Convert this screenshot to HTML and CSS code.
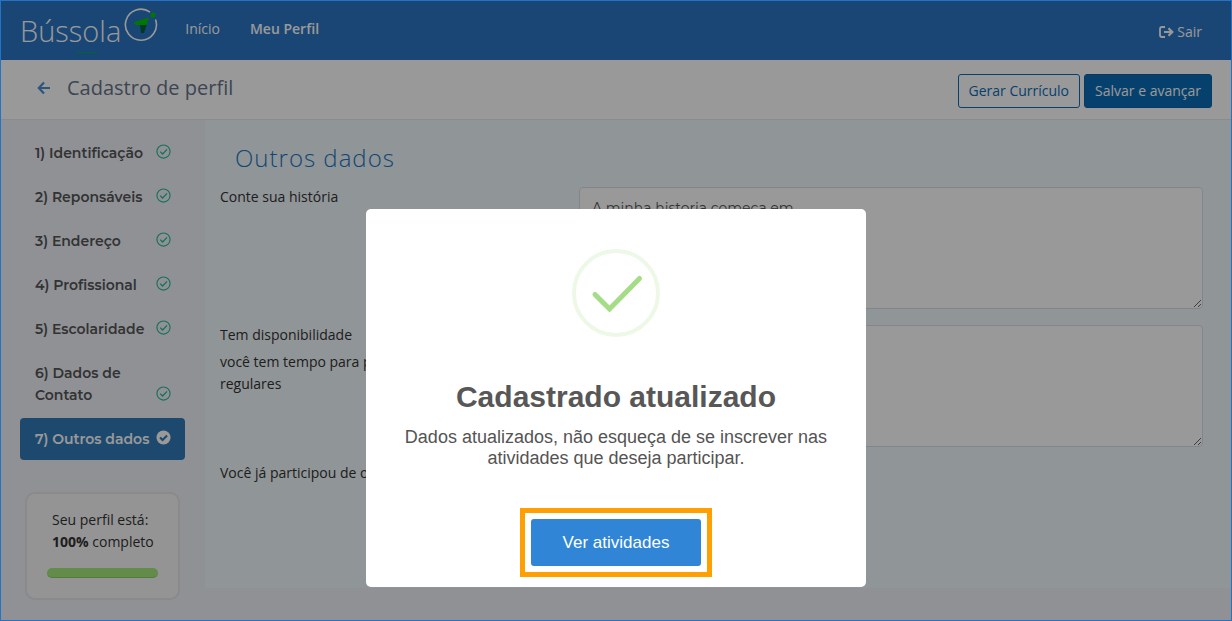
FILE: index.html
```html
<!DOCTYPE html>
<html lang="pt-BR">
<head>
    <meta charset="UTF-8">
    <meta name="viewport" content="width=device-width, initial-scale=1.0">
    <title>Bússola - Cadastro de perfil</title>
    <link rel="stylesheet" href="styles.css">
</head>
<body>
    <svg class="sprite" aria-hidden="true">
        <symbol id="check" viewBox="0 0 16 16">
            <circle cx="8" cy="8" r="7" fill="none" stroke="currentColor" stroke-width="1.200"/>
            <path d="M4.500 8.200l2.500 2.500 4.800-5" fill="none" stroke="currentColor" stroke-width="1.300"/>
        </symbol>
    </svg>

    <header class="navbar">
        <a class="logo" href="#">
            <span class="logo-text">Bússola</span>
            <svg class="logo-icon" width="34" height="34" viewBox="0 0 34 34">
                <path d="M26 4.200A15.500 15.500 0 1 0 31.500 11.500" fill="none" stroke="#fff" stroke-width="1.600"/>
                <circle cx="29" cy="7" r="2.600" fill="#00c800"/>
                <path d="M16 17L23 15.500 20 25 17 25z" fill="#006040"/>
                <path d="M9 14.500L25 9.500 22.500 17 12 17z" fill="#00c800"/>
            </svg>
            <span class="logo-line"></span>
        </a>
        <nav class="menu">
            <a href="#">Início</a>
            <a class="current" href="#">Meu Perfil</a>
        </nav>
        <a class="logout" href="#">
            <svg width="15" height="12" viewBox="0 0 15 12">
                <path d="M6 1H3Q1 1 1 3v6q0 2 2 2h3" fill="none" stroke="currentColor" stroke-width="1.800"/>
                <path d="M5 6h8M9.500 2.200L13.300 6 9.500 9.800" fill="none" stroke="currentColor" stroke-width="2.200"/>
            </svg>
            Sair
        </a>
    </header>

    <div class="titlebar">
        <a class="back" href="#" aria-label="Voltar">
            <svg width="14" height="14" viewBox="0 0 14 14">
                <path d="M13 7H2M7 1.500L1.800 7 7 12.500" fill="none" stroke="currentColor" stroke-width="2.200"/>
            </svg>
        </a>
        <h1>Cadastro de perfil</h1>
        <button class="btn" type="button">Gerar Currículo</button>
        <button class="btn btn-primary" type="button">Salvar e avançar</button>
    </div>

    <div class="layout">
        <aside class="sidebar">
            <nav class="steps">
                <a href="#"><span>1) Identificação</span><svg><use href="#check"/></svg></a>
                <a href="#"><span>2) Reponsáveis</span><svg><use href="#check"/></svg></a>
                <a href="#"><span>3) Endereço</span><svg><use href="#check"/></svg></a>
                <a href="#"><span>4) Profissional</span><svg><use href="#check"/></svg></a>
                <a href="#"><span>5) Escolaridade</span><svg><use href="#check"/></svg></a>
                <a href="#"><span>6) Dados de Contato</span><svg><use href="#check"/></svg></a>
                <a class="active" href="#"><span>7) Outros dados</span><svg viewBox="0 0 16 16">
                    <circle cx="8" cy="8" r="7.500" fill="currentColor"/>
                    <path d="M4.300 8l2.700 2.700 4.800-4.900" fill="none" stroke="#337ab7" stroke-width="2.200"/>
                </svg></a>
            </nav>
            <div class="status">
                <p>Seu perfil está:<br><strong>100%</strong> completo</p>
                <div class="progress"></div>
            </div>
        </aside>

        <main class="content">
            <h2>Outros dados</h2>
            <div class="form-row">
                <label for="historia">Conte sua história</label>
                <textarea id="historia">A minha historia começa em</textarea>
            </div>
            <div class="form-row">
                <div>
                    <label for="tempo">Tem disponibilidade</label>
                    <p>você tem tempo para participar de atividades regulares</p>
                </div>
                <textarea id="tempo"></textarea>
            </div>
            <div class="form-row">
                <span class="question">Você já participou de outros</span>
            </div>
        </main>
    </div>

    <div class="overlay">
        <div class="modal" role="dialog" aria-labelledby="modal-title">
            <svg class="success" width="88" height="88" viewBox="0 0 88 88">
                <circle cx="44" cy="44" r="42" fill="none" stroke="#edf8e7" stroke-width="4"/>
                <path d="M23 45.500L37.500 60 67.500 29.500" fill="none" stroke="#a5dc86" stroke-width="5" stroke-linecap="round"/>
            </svg>
            <h2 id="modal-title">Cadastrado atualizado</h2>
            <p>Dados atualizados, não esqueça de se inscrever nas atividades que deseja participar.</p>
            <div class="highlight">
                <button class="confirm" type="button">Ver atividades</button>
            </div>
        </div>
    </div>
</body>
</html>
```

FILE: styles.css
```css
* {
    box-sizing: border-box;
}
body {
    margin: 0;
    min-height: 100vh;
    font-family: "Open Sans", sans-serif;
    font-size: 14px;
    line-height: 22px;
    color: #333;
    background-color: #eef2f9;
}
h1, h2, p {
    margin: 0;
    font-weight: 400;
}
a {
    text-decoration: none;
}
.sprite {
    display: block;
    width: 0;
    height: 0;
}

/* top bar */
.navbar {
    display: flex;
    align-items: center;
    height: 60px;
    padding: 0 30px 0 20px;
    background-color: #2a75c3;
}
.logo {
    position: relative;
    display: flex;
    height: 50px;
    color: #fff;
}
.logo-text {
    padding-top: 4px;
    font-size: 29px;
    font-weight: 300;
    line-height: 44px;
}
.logo-icon {
    margin-left: 3px;
    margin-top: 3px;
}
.logo-line {
    position: absolute;
    left: 56px;
    bottom: 2px;
    width: 22px;
    height: 1px;
    background-color: #00a850;
}
.menu {
    display: flex;
    flex: 1;
    gap: 30px;
    padding: 0 0 3px 27px;
}
.menu a, .logout {
    color: #fff;
}
.menu .current {
    font-weight: 600;
}
.logout {
    display: flex;
    align-items: center;
    gap: 3px;
    padding-top: 3px;
}

/* page title */
.titlebar {
    display: flex;
    align-items: center;
    gap: 4px;
    height: 60px;
    padding: 2px 20px 0 37px;
    background-color: #fff;
    border-bottom: 1px solid #e4e8ee;
}
.titlebar h1 {
    flex: 1;
    padding-bottom: 6px;
    font-size: 20px;
    line-height: 28px;
    color: #67748c;
}
.back {
    display: flex;
    width: 26px;
    padding-bottom: 6px;
    color: #4a90d2;
}
.btn {
    height: 34px;
    padding: 0 10px;
    font-family: inherit;
    font-size: 14px;
    color: #0b6db7;
    background-color: #fff;
    border: 1px solid #0b6db7;
    border-radius: 3px;
    cursor: pointer;
}
.btn-primary {
    color: #fff;
    background-color: #0b6db7;
    border-color: #0a62a5;
}

/* sidebar */
.layout {
    display: flex;
    align-items: flex-start;
}
.sidebar {
    width: 205px;
    padding: 12px 20px;
}
.steps {
    display: flex;
    flex-direction: column;
    gap: 2px;
}
.steps a {
    display: flex;
    align-items: flex-end;
    justify-content: space-between;
    padding: 10px 14px 10px 15px;
    font-family: Montserrat, Inter, sans-serif;
    font-weight: 600;
    color: #555;
    border-radius: 4px;
}
.steps svg {
    flex: none;
    width: 15px;
    height: 15px;
    margin-bottom: 5px;
    color: #26b995;
}
.steps .active {
    color: #fff;
    background-color: #337ab7;
}
.steps .active svg {
    color: #fff;
}
.status {
    margin: 32px 5px 0;
    padding: 15px 20px 20px;
    background-color: #f7f7f7;
    border: 2px solid #e6e4e8;
    border-radius: 10px;
}
.status p {
    padding-left: 5px;
}
.progress {
    height: 10px;
    margin-top: 15px;
    background-color: #a5e87c;
    border-bottom: 1px solid #8ecb68;
    border-radius: 5px;
}

/* form */
.content {
    flex: 1;
    min-height: 468px;
    padding: 22px 29px 0 15px;
    background-color: #f1f8fc;
}
.content h2 {
    margin-bottom: 13px;
    padding-left: 15px;
    font-size: 24px;
    font-weight: 300;
    line-height: 32px;
    letter-spacing: 1px;
    color: #1c76c0;
}
.form-row {
    display: grid;
    grid-template-columns: 35% 1fr;
    gap: 15px;
    margin-bottom: 16px;
}
.form-row label, .question {
    display: block;
    margin-bottom: 6px;
    line-height: 20px;
}
.form-row textarea {
    display: block;
    width: 100%;
    height: 122px;
    padding: 9px 12px;
    font-family: Montserrat, Inter, sans-serif;
    font-size: 14px;
    font-weight: 400;
    line-height: 22px;
    color: #555;
    background-color: #fff;
    border: 1px solid #d9dfe9;
    border-radius: 4px;
    resize: both;
}

/* dialog */
.overlay {
    position: fixed;
    inset: 0;
    padding-top: 208px;
    background-color: rgba(0, 0, 0, 0.4);
    border: 1px solid #2273c9;
}
.modal {
    display: flex;
    flex-direction: column;
    align-items: center;
    max-width: 500px;
    margin: 0 auto;
    padding: 40px 17px 10px;
    font-family: "Liberation Sans", Arial, sans-serif;
    text-align: center;
    background-color: #fff;
    border-radius: 5px;
}
.modal h2 {
    margin: 40px 0 10px;
    font-size: 30px;
    font-weight: 700;
    line-height: 40px;
    color: #575757;
}
.modal p {
    padding: 0 17px;
    font-size: 18px;
    line-height: 21px;
    color: #545454;
}
.highlight {
    margin-top: 39px;
    padding: 6px;
    border: 5px solid #ff9f00;
}
.confirm {
    display: block;
    height: 47px;
    padding: 0 32px;
    font-family: inherit;
    font-size: 17px;
    color: #fff;
    background-color: #3085d6;
    border: none;
    border-radius: 3px;
    cursor: pointer;
}
```
